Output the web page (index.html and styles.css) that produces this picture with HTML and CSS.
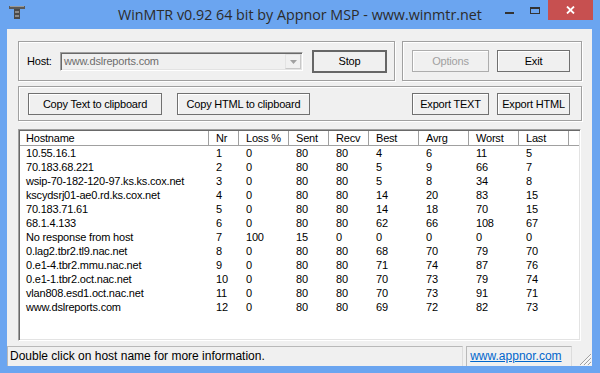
FILE: index.html
```html
<!DOCTYPE html>
<html>
<head>
<meta charset="utf-8">
<link rel="stylesheet" href="styles.css">
</head>
<body>
<div class="window">
  <div class="titlebar">
    <div class="tb-left">
      <svg class="appicon" width="16" height="14" viewBox="0 0 16 14">
        <rect x="0" y="0" width="16" height="3" fill="#5a5a5a"/>
        <rect x="1" y="0" width="14" height="1" fill="#9a9a9a"/>
        <rect x="5" y="3" width="6" height="10" fill="#4a4a4a"/>
        <rect x="6" y="5" width="4" height="2" fill="#8a8a8a"/>
        <rect x="6" y="9" width="4" height="2" fill="#8a8a8a"/>
      </svg>
    </div>
    <div class="title">WinMTR v0.92 64 bit by Appnor MSP - www.winmtr.net</div>
    <div class="caption">
      <div class="capbtn"><span class="min-ico"></span></div>
      <div class="capbtn"><span class="max-ico"></span></div>
      <div class="closebtn">
        <svg width="9" height="8" viewBox="0 0 9 8"><path d="M1 0.5 L8 7.5 M8 0.5 L1 7.5" stroke="#fff" stroke-width="1.8"/></svg>
      </div>
    </div>
  </div>
  <div class="client">
    <div class="content">
      <div class="toprow">
        <div class="group g-host">
          <span class="label">Host:</span>
          <div class="combo">
            <span class="combo-text">www.dslreports.com</span>
            <span class="combo-btn"><svg width="7" height="4" viewBox="0 0 7 4"><path d="M0 0 H7 L3.5 4 Z" fill="#a0a0a0"/></svg></span>
          </div>
          <div class="btn btn-default w-stop">Stop</div>
        </div>
        <div class="group g-opts">
          <div class="btn btn-disabled w-77">Options</div>
          <div class="btn w-73">Exit</div>
        </div>
      </div>
      <div class="group g-copy">
        <div class="btn w-134">Copy Text to clipboard</div>
        <div class="btn w-133">Copy HTML to clipboard</div>
        <div class="btn w-77 push">Export TEXT</div>
        <div class="btn w-73">Export HTML</div>
      </div>
      <div class="list">
        <div class="lrow lhead">
          <span>Hostname</span><span>Nr</span><span>Loss %</span><span>Sent</span><span>Recv</span><span>Best</span><span>Avrg</span><span>Worst</span><span>Last</span><span class="fill"></span>
        </div>
        <div class="lrow"><span>10.55.16.1</span><span>1</span><span>0</span><span>80</span><span>80</span><span>4</span><span>6</span><span>11</span><span>5</span></div>
        <div class="lrow"><span>70.183.68.221</span><span>2</span><span>0</span><span>80</span><span>80</span><span>5</span><span>9</span><span>66</span><span>7</span></div>
        <div class="lrow"><span>wsip-70-182-120-97.ks.ks.cox.net</span><span>3</span><span>0</span><span>80</span><span>80</span><span>5</span><span>8</span><span>34</span><span>8</span></div>
        <div class="lrow"><span>kscydsrj01-ae0.rd.ks.cox.net</span><span>4</span><span>0</span><span>80</span><span>80</span><span>14</span><span>20</span><span>83</span><span>15</span></div>
        <div class="lrow"><span>70.183.71.61</span><span>5</span><span>0</span><span>80</span><span>80</span><span>14</span><span>18</span><span>70</span><span>15</span></div>
        <div class="lrow"><span>68.1.4.133</span><span>6</span><span>0</span><span>80</span><span>80</span><span>62</span><span>66</span><span>108</span><span>67</span></div>
        <div class="lrow"><span>No response from host</span><span>7</span><span>100</span><span>15</span><span>0</span><span>0</span><span>0</span><span>0</span><span>0</span></div>
        <div class="lrow"><span>0.lag2.tbr2.tl9.nac.net</span><span>8</span><span>0</span><span>80</span><span>80</span><span>68</span><span>70</span><span>79</span><span>70</span></div>
        <div class="lrow"><span>0.e1-4.tbr2.mmu.nac.net</span><span>9</span><span>0</span><span>80</span><span>80</span><span>71</span><span>74</span><span>87</span><span>76</span></div>
        <div class="lrow"><span>0.e1-1.tbr2.oct.nac.net</span><span>10</span><span>0</span><span>80</span><span>80</span><span>70</span><span>73</span><span>79</span><span>74</span></div>
        <div class="lrow"><span>vlan808.esd1.oct.nac.net</span><span>11</span><span>0</span><span>80</span><span>80</span><span>70</span><span>73</span><span>91</span><span>71</span></div>
        <div class="lrow"><span>www.dslreports.com</span><span>12</span><span>0</span><span>80</span><span>80</span><span>69</span><span>72</span><span>82</span><span>73</span></div>
      </div>
    </div>
    <div class="statusbar">
      <div class="panel p-main">Double click on host name for more information.</div>
      <div class="panel p-link"><a class="link">www.appnor.com</a></div>
      <svg class="grip" width="13" height="13" viewBox="0 0 13 13">
        <path d="M12 1 L1 12 M12 5 L5 12 M12 9 L9 12" stroke="#a0a0a0" stroke-width="1"/>
        <path d="M12.5 2 L2 12.5 M12.5 6 L6 12.5 M12.5 10 L10 12.5" stroke="#ffffff" stroke-width="1"/>
      </svg>
    </div>
  </div>
</div>
</body>
</html>
```
FILE: styles.css
```css
html, body {
  margin: 0;
  padding: 0;
}
body {
  width: 600px;
  height: 373px;
  overflow: hidden;
  background: #6ba5f0;
  font-family: "Liberation Sans", Arial, sans-serif;
  font-size: 11px;
  letter-spacing: -0.2px;
  color: #000;
}
.window {
  display: flex;
  flex-direction: column;
  height: 373px;
}
.titlebar {
  height: 29px;
  display: grid;
  grid-template-columns: 1fr auto 1fr;
}
.tb-left {
  display: flex;
}
.appicon {
  margin: 6px 0 0 9px;
}
.title {
  font-family: "Open Sans", "Noto Sans", sans-serif;
  font-size: 14.3px;
  letter-spacing: 0;
  color: #2b2b2b;
  line-height: 30px;
  white-space: nowrap;
}
.caption {
  display: flex;
  justify-content: flex-end;
  align-items: flex-start;
  padding-right: 7px;
}
.capbtn {
  width: 26px;
  height: 20px;
  display: flex;
  justify-content: center;
}
.min-ico {
  width: 9px;
  height: 2px;
  background: #333;
  margin-top: 12px;
}
.max-ico {
  width: 10px;
  height: 7px;
  box-sizing: border-box;
  border: 1px solid #333;
  border-top-width: 2px;
  margin-top: 7px;
}
.closebtn {
  width: 45px;
  height: 20px;
  background: #c75050;
  display: flex;
  align-items: center;
  justify-content: center;
}
.client {
  margin-left: 7px;
  width: 585px;
  height: 337px;
  background: #f0f0f0;
  display: flex;
  flex-direction: column;
}
.content {
  padding: 12px 0 0 11px;
  display: flex;
  flex-direction: column;
}
.toprow {
  display: flex;
  gap: 7px;
}
.group {
  box-sizing: border-box;
  border: 1px solid #a0a0a0;
  box-shadow: inset 1px 1px 0 #fff, 1px 1px 0 #fff;
  display: flex;
  align-items: center;
}
.g-host {
  width: 377px;
  height: 40px;
  padding-left: 8px;
}
.g-opts {
  width: 180px;
  height: 40px;
  padding-left: 9px;
  gap: 8px;
}
.g-copy {
  margin-top: 5px;
  width: 564px;
  height: 35px;
  padding-left: 9px;
  padding-right: 11px;
  gap: 15px;
}
.g-copy .push {
  margin-left: auto;
  margin-right: -7px;
}
.label {
  width: 33px;
}
.combo {
  width: 243px;
  height: 19px;
  box-sizing: border-box;
  border-top: 1px solid #a0a0a0;
  border-left: 1px solid #a0a0a0;
  border-right: 1px solid #fff;
  border-bottom: 1px solid #fff;
  box-shadow: inset 1px 1px 0 #696969, inset -1px -1px 0 #e3e3e3;
  display: flex;
  align-items: center;
  padding: 0 1px 0 2px;
}
.combo-text {
  flex: 1;
  color: #6d6d6d;
  padding-left: 1px;
}
.combo-btn {
  width: 16px;
  height: 15px;
  margin-top: 1px;
  box-sizing: border-box;
  border: 1px solid #e3e3e3;
  border-right-color: #c8c8c8;
  border-bottom-color: #c8c8c8;
  display: flex;
  align-items: center;
  justify-content: center;
}
.btn {
  height: 22px;
  box-sizing: border-box;
  border: 1px solid #707070;
  box-shadow: inset 1px 1px 0 #fff;
  display: flex;
  align-items: center;
  justify-content: center;
  white-space: nowrap;
}
.btn-default {
  border: 2px solid #666;
  box-shadow: none;
  height: 23px;
}
.btn-disabled {
  color: #a0a0a0;
  border-color: #adadad;
}
.w-stop {
  width: 75px;
  margin-left: 9px;
}
.w-77 { width: 77px; }
.w-73 { width: 73px; }
.w-134 { width: 134px; }
.w-133 { width: 133px; }
.list {
  margin-top: 8px;
  width: 563px;
  height: 212px;
  box-sizing: border-box;
  background: #fff;
  border-top: 1px solid #a0a0a0;
  border-left: 1px solid #a0a0a0;
  border-right: 1px solid #fff;
  border-bottom: 1px solid #fff;
  box-shadow: inset 1px 1px 0 #696969, inset -1px -1px 0 #e3e3e3;
  padding: 1px 1px 0 1px;
  overflow: hidden;
}
.lrow {
  display: grid;
  grid-template-columns: 190px 30px 50px 40px 40px 50px 50px 50px 50px 1fr;
  height: 14px;
  line-height: 14px;
}
.lrow span {
  padding-left: 6px;
  white-space: nowrap;
  overflow: hidden;
}
.lhead {
  height: 15px;
  line-height: 15px;
  border-bottom: 1px solid #a0a0a0;
  box-sizing: border-box;
}
.lhead span {
  box-shadow: inset -1px 0 0 #fff, inset -2px 0 0 #a0a0a0;
}
.lhead span.fill {
  box-shadow: none;
}
.statusbar {
  margin-top: 5px;
  height: 20px;
  display: flex;
  align-items: stretch;
  gap: 3px;
}
.panel {
  box-sizing: border-box;
  border: 1px solid #b9b9b9;
  border-right-color: #dcdcdc;
  border-bottom: none;
  font-size: 12px;
  letter-spacing: 0;
  line-height: 19px;
  white-space: nowrap;
}
.p-main {
  width: 457px;
  padding-left: 2px;
}
.p-link {
  width: 106px;
  padding-left: 3px;
}
.link {
  color: #0066cc;
  text-decoration: underline;
}
.grip {
  align-self: flex-end;
  margin-left: 4px;
}
```
